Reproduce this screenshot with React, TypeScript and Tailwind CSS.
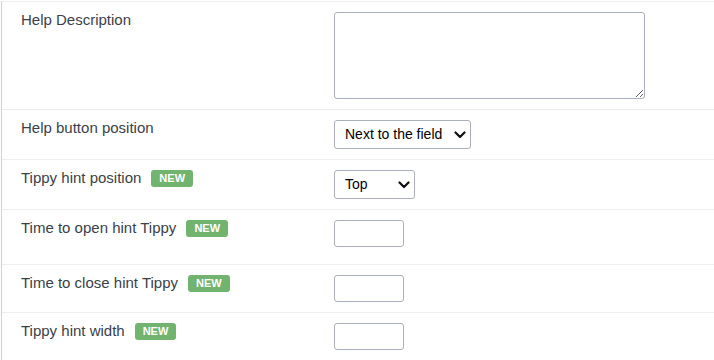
import React from "react";

const font = { fontFamily: '"Liberation Sans", Arial, sans-serif' };

function Badge() {
  return (
    <span className="ml-[10px] inline-flex h-[17px] items-center rounded-[3px] bg-[#72b370] px-[8px] text-[11px] font-bold leading-none text-white">
      NEW
    </span>
  );
}

function Chevron() {
  return (
    <svg
      className="pointer-events-none absolute right-[5px] top-1/2 -translate-y-1/2"
      width="12"
      height="8"
      viewBox="0 0 12 8"
      fill="none"
    >
      <path d="M1.5 1.5 6 6l4.5-4.5" stroke="#111" strokeWidth="2.2" strokeLinecap="round" strokeLinejoin="round" />
    </svg>
  );
}

function Select({ value, width }: { value: string; width: string }) {
  return (
    <div className={`relative h-[29px] ${width}`}>
      <select
        defaultValue={value}
        className="h-full w-full appearance-none rounded-[3px] border border-[#a9b0bc] bg-white pl-[10px] text-[14px] text-black outline-none"
        style={font}
      >
        <option>{value}</option>
      </select>
      <Chevron />
    </div>
  );
}

function Row({
  label,
  isNew,
  height,
  children,
}: {
  label: string;
  isNew?: boolean;
  height: string;
  children: React.ReactNode;
}) {
  return (
    <div className={`flex border-t border-[#eceef1] ${height}`}>
      <div className="mt-[8px] flex h-[20px] w-[332px] shrink-0 items-center pl-[19px] text-[15px] leading-[20px] text-[#3b4148]">
        <span>{label}</span>
        {isNew && <Badge />}
      </div>
      <div className="pt-[10px]">{children}</div>
    </div>
  );
}

export default function App() {
  return (
    <div className="h-[360px] w-[714px] overflow-hidden bg-white pl-px pt-px" style={font}>
      <div className="border-l border-[#cbd2dc]">
        <Row label="Help Description" height="h-[108px]">
          <textarea className="block h-[87px] w-[311px] rounded-[3px] border border-[#a9b0bc] bg-white outline-none" />
        </Row>
        <Row label="Help button position" height="h-[50px]">
          <Select value="Next to the field" width="w-[137px]" />
        </Row>
        <Row label="Tippy hint position" isNew height="h-[50px]">
          <Select value="Top" width="w-[81px]" />
        </Row>
        <Row label="Time to open hint Tippy" isNew height="h-[55px]">
          <input className="block h-[27px] w-[70px] rounded-[3px] border border-[#a9b0bc] bg-white outline-none" />
        </Row>
        <Row label="Time to close hint Tippy" isNew height="h-[48px]">
          <input className="block h-[27px] w-[70px] rounded-[3px] border border-[#a9b0bc] bg-white outline-none" />
        </Row>
        <Row label="Tippy hint width" isNew height="h-[48px]">
          <input className="block h-[27px] w-[70px] rounded-[3px] border border-[#a9b0bc] bg-white outline-none" />
        </Row>
      </div>
    </div>
  );
}
